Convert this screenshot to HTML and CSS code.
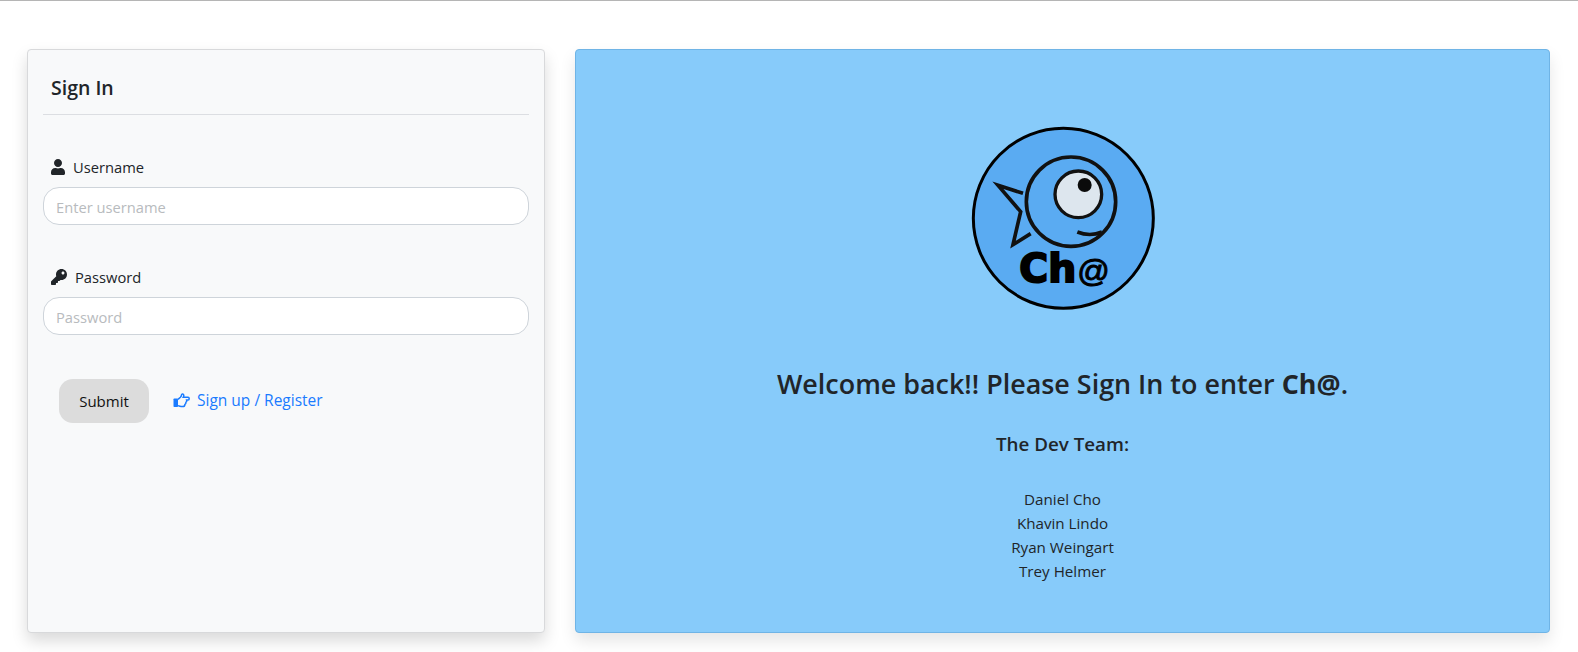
FILE: index.html
```html
<!DOCTYPE html>
<html>
    <head>
        <meta charset="utf-8">
        <title>Ch@ Sign In</title>
        <link rel="stylesheet" href="styles.css">
    </head>
    <body>
        <div class="page">
            <div class="signCard">
                <h5 class="signTitle">Sign In</h5>
                <form class="signForm">
                    <div class="field">
                        <label class="fieldLabel" for="username">
                            <svg class="labelIcon" viewBox="0 0 448 512"><path d="M224 256c70.7 0 128-57.3 128-128S294.7 0 224 0 96 57.3 96 128s57.3 128 128 128zm89.6 32h-16.7c-22.2 10.2-46.9 16-72.9 16s-50.6-5.8-72.9-16h-16.7C60.2 288 0 348.2 0 422.4V464c0 26.5 21.5 48 48 48h352c26.5 0 48-21.5 48-48v-41.6c0-74.2-60.2-134.4-134.4-134.4z"/></svg>
                            Username
                        </label>
                        <input class="fieldInput" id="username" type="text" placeholder="Enter username">
                    </div>
                    <div class="field">
                        <label class="fieldLabel keyLabel" for="password">
                            <svg class="labelIcon" viewBox="0 0 512 512"><path d="M512 176.001C512 273.203 433.202 352 336 352c-11.22 0-22.19-1.062-32.827-3.069l-24.012 27.014A23.999 23.999 0 0 1 261.223 384H224v40c0 13.255-10.745 24-24 24h-40v40c0 13.255-10.745 24-24 24H24c-13.255 0-24-10.745-24-24v-78.059c0-6.365 2.529-12.47 7.029-16.971l161.802-161.802C163.108 213.814 160 195.271 160 176 160 78.798 238.797.001 335.999 0 433.488-.001 512 78.511 512 176.001zM336 128c0 26.51 21.49 48 48 48s48-21.49 48-48-21.49-48-48-48-48 21.49-48 48z"/></svg>
                            Password
                        </label>
                        <input class="fieldInput" id="password" type="password" placeholder="Password">
                    </div>
                    <div class="formActions">
                        <button class="submitBtn" type="button">Submit</button>
                        <a class="registerLink" href="#">
                            <svg class="linkIcon" viewBox="0 0 17 15">
                                <rect class="cuff" x="0.5" y="5.5" width="4.5" height="8.5" rx="0.8"/>
                                <path class="hand" d="M5 6.4 L7.4 4.2 C8.2 3.4 8.5 2.5 8.6 1.6 C8.8 0.6 10.7 0.7 10.8 2.4 C10.8 3.1 10.5 3.7 10.2 4.3 L15 4.3 C16.6 4.4 16.6 6.9 15 7 L13.6 7 C13.9 7.9 13.6 8.9 12.9 9.3 C13 10.2 12.6 11.1 11.9 11.4 C11.9 12.8 11 13.6 9.6 13.6 L8.2 13.6 C6.9 13.6 6 13.1 5 12.6"/>
                            </svg>
                            Sign up / Register
                        </a>
                    </div>
                </form>
            </div>
            <div class="welcomePanel">
                <svg class="logo" viewBox="7 0 660 630">
                    <circle class="logoDisc" cx="338" cy="325" r="270"/>
                    <path class="logoLine" d="M217 250 L142 226 L210 305 L187 404 L240 371"/>
                    <circle class="logoLine" cx="361" cy="275" r="134"/>
                    <path class="logoLine" d="M380 366 C405 376 430 376 454 366"/>
                    <circle class="logoEye" cx="383" cy="253" r="70"/>
                    <circle class="logoPupil" cx="402" cy="225" r="21"/>
                    <text class="logoText" x="206" y="515">Ch<tspan class="logoAt" x="380" y="516">@</tspan></text>
                </svg>
                <h3 class="welcomeTitle">Welcome back!! Please Sign In to enter <strong>Ch@</strong>.</h3>
                <h5 class="teamTitle">The Dev Team:</h5>
                <p class="teamList">
                    Daniel Cho<br>
                    Khavin Lindo<br>
                    Ryan Weingart<br>
                    Trey Helmer
                </p>
            </div>
        </div>
    </body>
</html>
```

FILE: styles.css
```css
body,html{
    margin:0px;
    padding:0px;
}
body{
    font-family:"Open Sans","Noto Sans",sans-serif;
    font-size:16px;
    color:#212529;
    background:white;
    border-top:1px solid #b5b5b5;
}
.page{
    display:flex;
    gap:30px;
    padding:48px 28px 19px 27px;
}
.signCard{
    width:518px;
    height:584px;
    box-sizing:border-box;
    background:#f8f9fa;
    border:1px solid #d8d9db;
    border-radius:4px;
    padding:15px;
    box-shadow:0 8px 16px rgba(0,0,0,0.15);
}
.signTitle{
    margin:0px;
    padding:9px 8px 13px 8px;
    font-size:19.5px;
    font-weight:600;
    line-height:27px;
    border-bottom:1px solid #dcdee2;
}
.signForm{
    padding-top:40px;
}
.field{
    margin-bottom:40px;
}
.fieldLabel{
    display:flex;
    align-items:center;
    gap:8px;
    padding-left:8px;
    margin-bottom:8px;
    font-size:14.7px;
    line-height:24px;
}
.labelIcon{
    width:14px;
    height:16px;
    fill:#212529;
}
.keyLabel .labelIcon{
    width:16px;
}
.fieldInput{
    display:block;
    width:100%;
    height:38px;
    box-sizing:border-box;
    padding:8px 12px 6px 12px;
    font-family:inherit;
    font-size:14.7px;
    color:#495057;
    background:white;
    border:1px solid #ced4da;
    border-radius:16px;
}
.fieldInput::placeholder{
    color:#b8bbbe;
}
.formActions{
    display:flex;
    align-items:center;
    gap:24px;
    padding:4px 16px;
}
.submitBtn{
    width:90px;
    height:44px;
    font-family:inherit;
    font-size:15px;
    color:#111;
    background:#dcdcdc;
    border:none;
    border-radius:14px;
}
.registerLink{
    display:flex;
    align-items:center;
    gap:7px;
    margin-top:-2px;
    font-size:15.5px;
    color:#1a7bff;
    text-decoration:none;
}
.linkIcon{
    width:17px;
    height:15px;
}
.cuff{
    fill:#1a7bff;
}
.hand{
    fill:none;
    stroke:#1a7bff;
    stroke-width:1.5;
}
.welcomePanel{
    flex:1;
    height:584px;
    box-sizing:border-box;
    display:flex;
    flex-direction:column;
    align-items:center;
    padding-top:60px;
    background:#87cbfa;
    border:1px solid #6fb4e6;
    border-radius:4px;
    box-shadow:0 8px 16px rgba(0,0,0,0.1);
}
.logo{
    width:220px;
    height:210px;
}
.logoDisc{
    fill:#5aabf2;
    stroke:black;
    stroke-width:9;
}
.logoLine{
    fill:none;
    stroke:#111;
    stroke-width:11;
    stroke-linejoin:miter;
}
.logoEye{
    fill:#dde6ee;
    stroke:#111;
    stroke-width:10;
}
.logoPupil{
    fill:#0b0b0b;
}
.logoText{
    font-family:"DejaVu Sans",sans-serif;
    font-weight:bold;
    font-size:118px;
    fill:black;
    stroke:black;
    stroke-width:6;
}
.logoAt{
    font-family:"Liberation Sans",sans-serif;
    font-weight:normal;
    font-size:96px;
    stroke-width:3;
}
.welcomeTitle{
    margin:44px 0px 0px 0px;
    font-size:26.9px;
    font-weight:600;
    line-height:40px;
}
.welcomeTitle strong{
    font-weight:700;
}
.teamTitle{
    margin:26px 0px 0px 0px;
    font-size:18.8px;
    font-weight:600;
    line-height:28px;
}
.teamList{
    margin:29px 0px 0px 0px;
    font-size:15.2px;
    line-height:24px;
    text-align:center;
}
```
